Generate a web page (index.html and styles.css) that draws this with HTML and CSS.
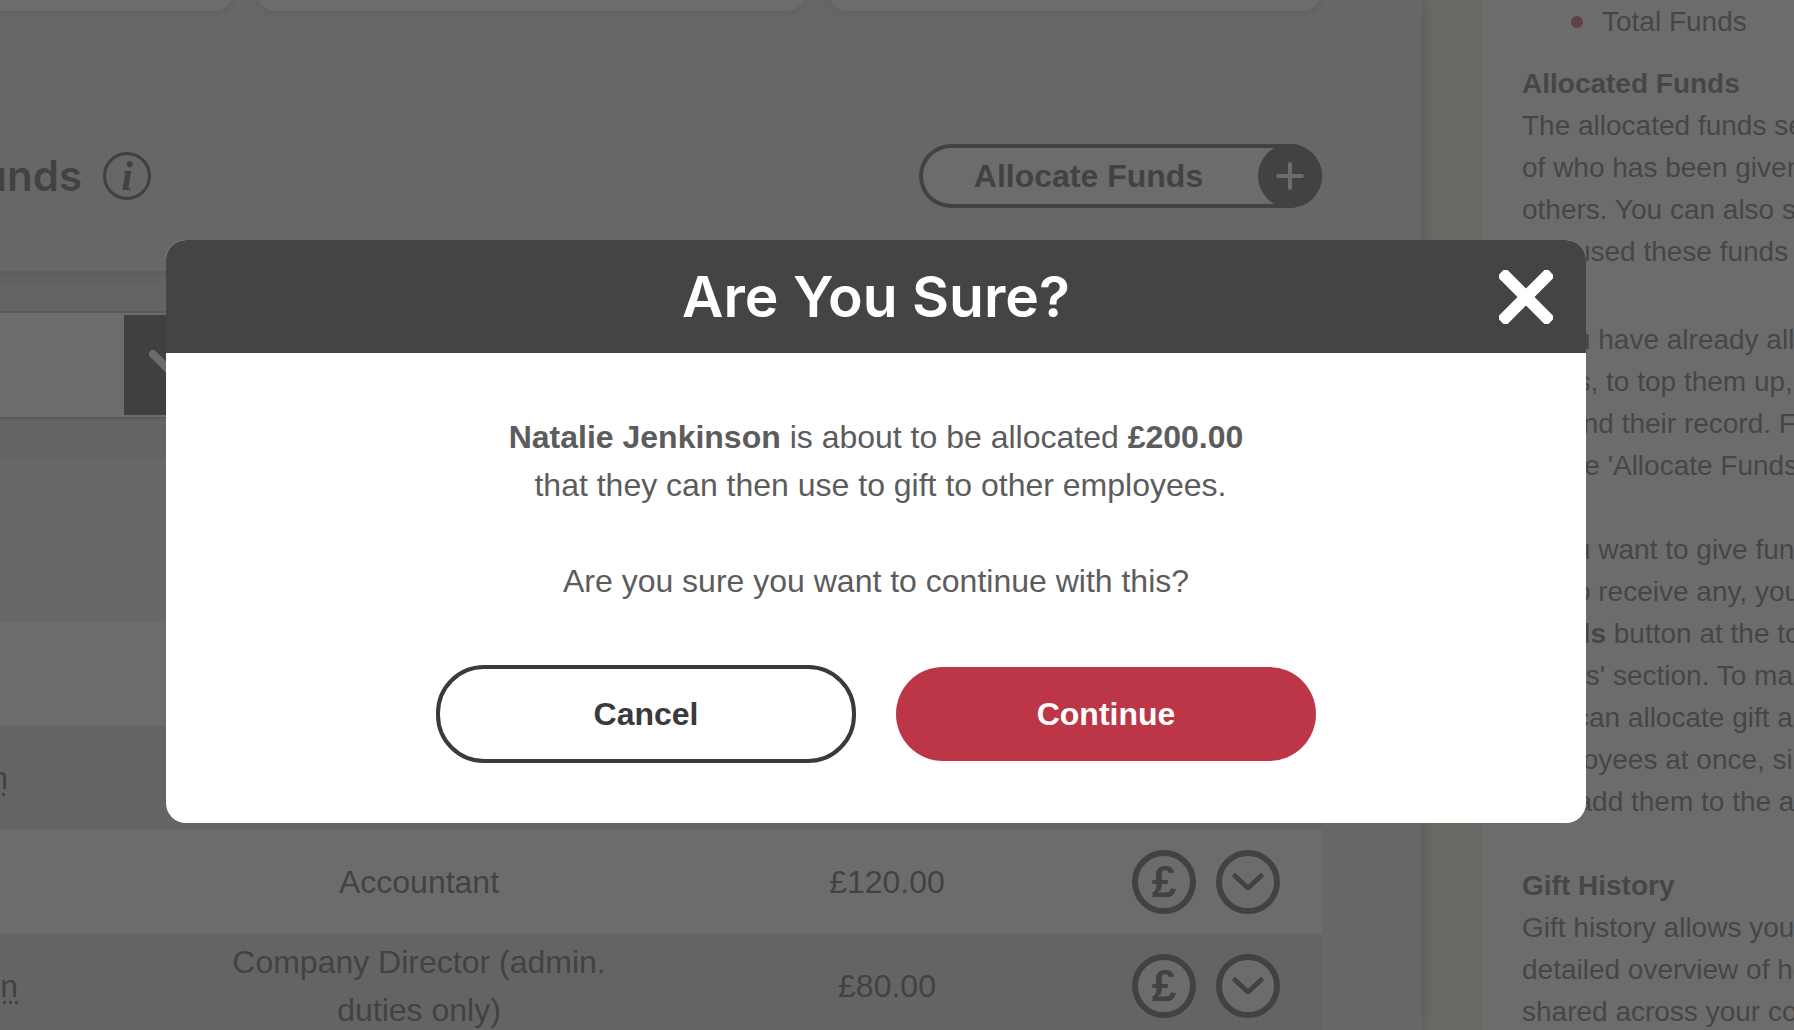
FILE: index.html
```html
<!DOCTYPE html>
<html lang="en">
<head>
<meta charset="utf-8">
<title>Allocated Funds</title>
<link rel="stylesheet" href="styles.css">
</head>
<body>
<div class="page">
  <main class="main">
    <div class="cards">
      <div class="card card-first"></div>
      <div class="card card-middle"></div>
      <div class="card card-last"></div>
    </div>
    <header class="section-head">
      <div class="section-title">
        <h2 class="heading">Funds</h2>
        <span class="info">i</span>
      </div>
      <button class="allocate" type="button">
        <span class="allocate-label">Allocate Funds</span>
        <span class="allocate-icon">
          <svg width="30" height="30" viewBox="0 0 30 30" fill="none" stroke="#fff" stroke-width="4" stroke-linecap="round"><path d="M15 3v24M3 15h24"/></svg>
        </span>
      </button>
    </header>
    <div class="filter">
      <div class="filter-box">
        <button class="filter-toggle" type="button" aria-label="Open filter">
          <svg width="50" height="30" viewBox="0 0 50 30" fill="none" stroke="#fff" stroke-width="8" stroke-linecap="round" stroke-linejoin="round"><path d="M4 4l21 21L46 4"/></svg>
        </button>
      </div>
    </div>
    <table class="table">
      <colgroup><col class="col-name"><col><col class="col-amount"><col class="col-actions"></colgroup>
      <thead><tr><th></th><th></th><th></th><th></th></tr></thead>
      <tbody>
        <tr><td></td><td></td><td></td><td></td></tr>
        <tr><td class="name"><div class="name-wrap name-short"><a class="name-link" href="#">Jenkinson</a></div></td><td></td><td></td><td></td></tr>
        <tr>
          <td></td><td>Accountant</td><td>£120.00</td>
          <td><div class="actions">
            <button class="round" type="button" aria-label="Add funds">£</button>
            <button class="round" type="button" aria-label="Show details"><svg width="32" height="18" viewBox="0 0 32 18" fill="none" stroke="#3a3a3a" stroke-width="5" stroke-linecap="round" stroke-linejoin="round"><path d="M3 3l13 12L29 3"/></svg></button>
          </div></td>
        </tr>
        <tr>
          <td class="name"><div class="name-wrap"><a class="name-link" href="#">Jackson</a></div></td><td>Company Director (admin. duties only)</td><td>£80.00</td>
          <td><div class="actions">
            <button class="round" type="button" aria-label="Add funds">£</button>
            <button class="round" type="button" aria-label="Show details"><svg width="32" height="18" viewBox="0 0 32 18" fill="none" stroke="#3a3a3a" stroke-width="5" stroke-linecap="round" stroke-linejoin="round"><path d="M3 3l13 12L29 3"/></svg></button>
          </div></td>
        </tr>
      </tbody>
    </table>
  </main>
  <aside class="help">
    <ul class="help-list"><li>Total Funds</li></ul>
    <h3 class="help-title">Allocated Funds</h3>
    <p class="help-text help-intro">The allocated funds section<br>of who has been given<br>others. You can also see<br>has used these funds</p>
    <p class="help-text">If you have already allocated<br>funds, to top them up,<br>but find their record. From<br>on the 'Allocate Funds'</p>
    <p class="help-text">If you want to give funds<br>yet to receive any, you<br><b>Funds</b> button at the top<br>Funds' section. To make<br>you can allocate gift and<br>employees at once, simply<br>and add them to the al</p>
    <h3 class="help-title">Gift History</h3>
    <p class="help-text">Gift history allows you<br>detailed overview of how<br>shared across your company</p>
  </aside>
</div>
<div class="backdrop">
  <section class="modal" role="dialog" aria-labelledby="modal-title">
    <header class="modal-head">
      <h1 class="modal-title" id="modal-title">Are You Sure?</h1>
      <button class="close" type="button" aria-label="Close">
        <svg width="54" height="54" viewBox="0 0 54 54" fill="#fff"><rect x="-8" y="21" width="70" height="12" rx="4" transform="rotate(45 27 27)"/><rect x="-8" y="21" width="70" height="12" rx="4" transform="rotate(-45 27 27)"/></svg>
      </button>
    </header>
    <div class="modal-body">
      <p class="modal-text"><b>Natalie Jenkinson</b> is about to be allocated <b>£200.00</b><br>&nbsp;that they can then use to gift to other employees.</p>
      <p class="modal-text">Are you sure you want to continue with this?</p>
      <div class="modal-buttons">
        <button class="btn btn-cancel" type="button">Cancel</button>
        <button class="btn btn-continue" type="button">Continue</button>
      </div>
    </div>
  </section>
</div>
</body>
</html>
```
FILE: styles.css
```css
* { box-sizing: border-box; }
html, body { height: 100%; }
body {
  margin: 0;
  overflow: hidden;
  font-family: "Liberation Sans", Arial, sans-serif;
  font-size: 32px;
  line-height: 48px;
  color: #3a3a3a;
  background: #f2eedc;
}
h1, h2, h3, p, ul { margin: 0; }
button { font: inherit; color: inherit; margin: 0; padding: 0; cursor: pointer; }
svg { display: block; }

.page { display: flex; gap: 60px; height: 100%; overflow: hidden; }
.main { flex: 1; min-width: 0; background: #e6e6e6; box-shadow: 0 0 12px rgba(0, 0, 0, .35); }

.cards { display: flex; gap: 22px; margin-top: -29px; padding-right: 100px; }
.card { height: 40px; background: #fff; border-radius: 20px; box-shadow: 0 3px 8px rgba(0, 0, 0, .16); }
.card-first { flex: 234; border-bottom-left-radius: 0; }
.card-middle { flex: 549; }
.card-last { flex: 494; }

.section-head {
  display: flex;
  align-items: center;
  justify-content: space-between;
  margin-top: 70px;
  height: 190px;
  padding-right: 100px;
}
.section-title { display: flex; align-items: center; gap: 21px; }
.heading {
  display: flex;
  justify-content: flex-end;
  width: 82px;
  font: 600 42px/48px Inter, sans-serif;
}
.info {
  display: flex;
  align-items: center;
  justify-content: center;
  width: 48px;
  height: 48px;
  border: 3px solid #303030;
  border-radius: 50%;
  font: italic bold 42px/42px "Liberation Serif", serif;
}
.allocate {
  display: flex;
  align-items: center;
  width: 403px;
  height: 64px;
  border: 0;
  border-radius: 32px;
  background: #fff;
  box-shadow: inset 0 0 0 4px #3a3a3a;
  font-weight: bold;
}
.allocate-label { flex: 1; text-align: center; }
.allocate-icon {
  display: flex;
  align-items: center;
  justify-content: center;
  width: 64px;
  height: 64px;
  border-radius: 50%;
  background: #3a3a3a;
}

.filter { padding: 40px 0; background: linear-gradient(#bcbcbc, #d8d8d8 14px); }
.filter-box {
  display: flex;
  justify-content: flex-end;
  width: 228px;
  padding: 2px;
  border: 2px solid #a8a8a8;
  border-left: 0;
  background: #fff;
}
.filter-toggle {
  display: flex;
  align-items: center;
  justify-content: center;
  width: 100px;
  height: 100px;
  border: 0;
  background: #303030;
}

.table { width: calc(100% - 100px); border-collapse: collapse; table-layout: fixed; }
.col-name { width: 154px; }
.col-amount { width: 406px; }
.col-actions { width: 232px; }
.table th { height: 163px; padding: 0; }
.table td { height: 104px; padding: 4px 60px; text-align: center; vertical-align: middle; }
.table td:nth-child(n+3) { padding: 0; }
.table td.name { padding: 0; }
.table tbody tr:nth-child(odd) { background: #fff; }
.table tbody tr:nth-child(even) { background: #d8d8d8; }
.name-wrap { display: flex; justify-content: flex-end; width: 18px; }
.name-short { width: 8px; }
.name-link { color: inherit; text-decoration: underline dotted 3px; text-underline-offset: 4px; }
.actions { display: flex; justify-content: center; gap: 20px; }
.round {
  display: flex;
  align-items: center;
  justify-content: center;
  width: 64px;
  height: 64px;
  border: 6px solid #3a3a3a;
  border-radius: 50%;
  background: #fff;
  font: bold 44px/48px "Liberation Sans", Arial, sans-serif;
}

.help {
  flex: 0 0 312px;
  padding: 1px 0 0 40px;
  overflow: hidden;
  background: #fff;
  color: #4c4c4c;
  font-size: 28px;
  line-height: 42px;
  white-space: nowrap;
}
.help-list { margin-bottom: 20px; padding-left: 49px; list-style: none; }
.help-list li { display: flex; align-items: center; gap: 19px; }
.help-list li::before { content: ""; width: 12px; height: 12px; border-radius: 50%; background: #bd3647; }
.help-title { font-size: 28px; }
.help-text { margin-bottom: 42px; }
.help-intro { margin-bottom: 46px; }

.backdrop {
  position: fixed;
  inset: 0;
  padding: 240px 208px 0 166px;
  background: rgba(68, 68, 68, .79);
}
.modal { border-radius: 20px; overflow: hidden; background: #fff; }
.modal-head {
  display: grid;
  grid-template-columns: 1fr auto 1fr;
  align-items: center;
  height: 113px;
  padding: 0 33px;
  background: #444;
  color: #fff;
}
.modal-title { grid-column: 2; font: 600 57px/64px Inter, sans-serif; }
.close { justify-self: end; border: 0; background: none; }
.modal-body { padding: 60px; text-align: center; color: #5c5c5c; }
.modal-text + .modal-text { margin-top: 48px; }
.modal-buttons { display: flex; align-items: center; justify-content: center; gap: 40px; margin-top: 60px; }
.btn { width: 420px; height: 94px; border: 0; border-radius: 48px; font-weight: bold; }
.btn-cancel { height: 98px; border: 4px solid #3a3a3a; background: #fff; color: #3a3a3a; }
.btn-continue { background: #bd3647; color: #fff; }
```
